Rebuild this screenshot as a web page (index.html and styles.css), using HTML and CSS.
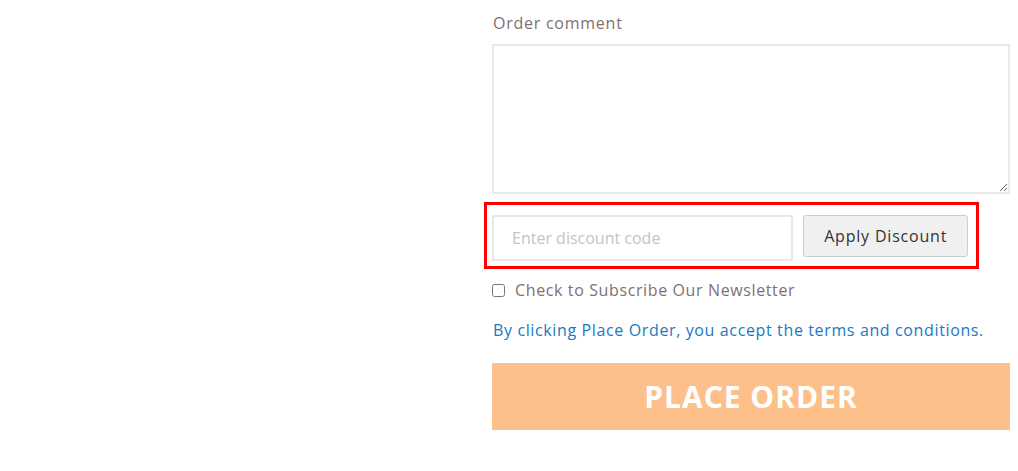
FILE: index.html
```html
<!DOCTYPE html>
<html lang="en">
<head>
    <meta charset="UTF-8">
    <title>Checkout - Order comment</title>
    <!-- css file link -->
    <link rel="stylesheet" href="styles.css">
</head>
<body>
    <div class="page">
        <!-- order form column -->
        <form class="order-form">
            <label class="comment-label" for="comment">Order comment</label>
            <textarea id="comment" class="comment-box"></textarea>

            <!-- discount row -->
            <div class="discount-row">
                <input type="text" class="discount-input" placeholder="Enter discount code">
                <button type="button" class="discount-btn">Apply Discount</button>
            </div>

            <label class="newsletter">
                <input type="checkbox" class="newsletter-check">
                <span>Check to Subscribe Our Newsletter</span>
            </label>

            <p class="terms"><a href="#">By clicking Place Order, you accept the terms and conditions.</a></p>

            <button type="button" class="place-order">PLACE ORDER</button>
        </form>
    </div>
</body>
</html>
```

FILE: styles.css
```css
*{
    margin: 0;
    padding: 0;
    box-sizing: border-box;
}
body{
    font-family: "Open Sans", "DejaVu Sans", sans-serif;
    background: #fff;
    color: #777;
}
.page{
    display: flex;
    justify-content: flex-end;
    padding: 12px 8px 0 0;
}
.order-form{
    width: 518px;
    display: flex;
    flex-direction: column;
}
.comment-label{
    font-size: 16px;
    line-height: 22px;
    color: #7d7171;
    letter-spacing: 0.75px;
    padding-left: 1px;
    margin-bottom: 10px;
}
.comment-box{
    width: 100%;
    height: 150px;
    border: 2px solid #e8e8e8;
    resize: vertical;
    font-family: inherit;
}
.discount-row{
    display: flex;
    gap: 10px;
    align-items: flex-start;
    width: 495px;
    margin: 8px 0 0 -8px;
    padding: 10px 8px 5px 5px;
    border: 3px solid #ff0000;
}
.discount-input{
    width: 302px;
    height: 46px;
    border: 2px solid #e8e8e8;
    padding: 0 18px;
    font-family: "Open Sans", sans-serif;
    font-size: 16px;
    outline: none;
}
.discount-input::placeholder{
    color: #c4c4c4;
}
.discount-btn{
    width: 165px;
    height: 42px;
    background: #f0f0f0;
    border: 1px solid #cdcdcd;
    border-radius: 3px;
    font-family: "Open Sans", "DejaVu Sans", sans-serif;
    font-size: 16px;
    letter-spacing: 0.8px;
    color: #333;
    cursor: pointer;
}
.newsletter{
    display: flex;
    align-items: center;
    gap: 10px;
    margin-top: 10px;
    font-size: 16px;
    line-height: 22px;
    letter-spacing: 0.62px;
    color: #7d7171;
}
.newsletter-check{
    width: 13px;
    height: 13px;
    margin-left: 0;
}
.terms{
    margin-top: 18px;
    font-size: 16px;
    line-height: 22px;
    letter-spacing: 0.63px;
    padding-left: 1px;
}
.terms a{
    color: #1979c3;
    text-decoration: none;
}
.place-order{
    margin-top: 22px;
    width: 100%;
    height: 67px;
    border: none;
    background: #fec08a;
    color: #fff;
    font-family: "Open Sans", sans-serif;
    font-weight: 700;
    font-size: 30px;
    letter-spacing: 1px;
    cursor: pointer;
}
```
